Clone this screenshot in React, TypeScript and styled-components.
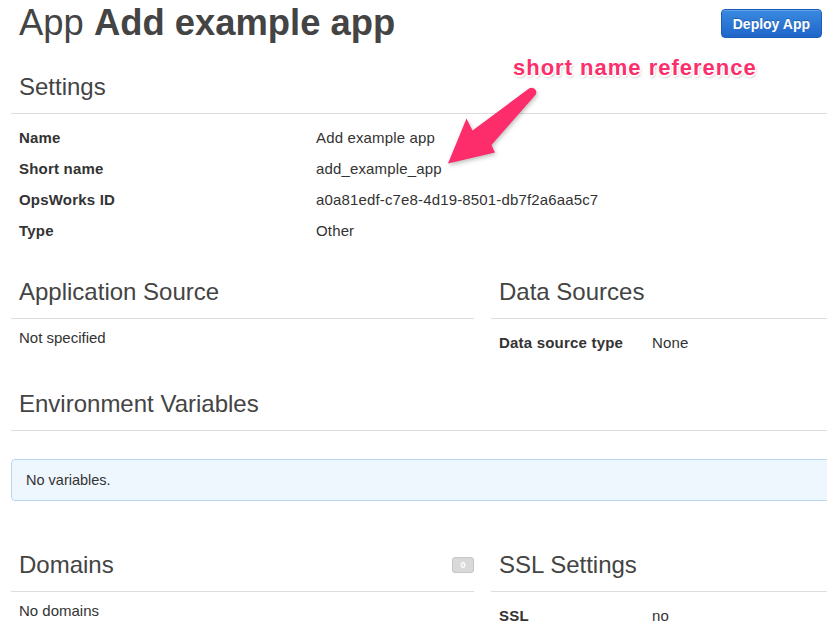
import React from "react";
import styled, { createGlobalStyle } from "styled-components";

const GlobalStyle = createGlobalStyle`
  html, body {
    margin: 0;
    padding: 0;
    background: #fff;
    overflow: hidden;
  }
  body {
    font-family: "Liberation Sans", Helvetica, Arial, sans-serif;
    color: #333;
    font-size: 15px;
  }
`;

const Page = styled.div`
  position: relative;
  width: 943px;
  padding-left: 11px;
  display: flex;
  flex-direction: column;
`;

const Header = styled.div`
  width: 811px;
  display: flex;
  justify-content: space-between;
  align-items: flex-start;
  padding-top: 3px;
`;

const Title = styled.h1`
  margin: 0;
  padding-left: 8px;
  font-size: 36.4px;
  line-height: 40px;
  font-weight: 400;
  color: #444;
  b {
    font-weight: 700;
  }
`;

const DeployButton = styled.button`
  margin-top: 6px;
  height: 29px;
  padding: 0 11px;
  border: 1px solid #1b5db8;
  border-radius: 4px;
  background: linear-gradient(#3a8ae0, #1f65c9);
  color: #fff;
  font-family: "Liberation Sans", Helvetica, Arial, sans-serif;
  font-size: 14px;
  font-weight: 700;
  text-shadow: 0 -1px 0 rgba(0, 0, 0, 0.25);
  box-shadow: inset 0 1px 0 rgba(255, 255, 255, 0.2);
`;

const Section = styled.section<{ $top?: number; $bottom?: number }>`
  margin-top: ${(p) => p.$top ?? 0}px;
  margin-bottom: ${(p) => p.$bottom ?? 30}px;
  min-width: 0;
`;

const SectionHeader = styled.div`
  display: flex;
  justify-content: space-between;
  align-items: center;
  padding: 2px 0 12px 8px;
  border-bottom: 1px solid #ddd;
`;

const SectionTitle = styled.h2`
  margin: 0;
  font-size: 24px;
  line-height: 28px;
  font-weight: 400;
  color: #444;
`;

const CountBadge = styled.span`
  display: inline-flex;
  align-items: center;
  justify-content: center;
  width: 20px;
  height: 14px;
  border: 1px solid #c6c6c6;
  border-radius: 3px;
  background: #d9d9d9;
  color: #fff;
  font-size: 9px;
  font-weight: 700;
`;

const Rows = styled.div`
  padding-top: 8px;
`;

const Row = styled.div<{ $labelWidth: number }>`
  display: grid;
  grid-template-columns: ${(p) => p.$labelWidth}px 1fr;
  align-items: center;
  height: 31px;
  padding-left: 8px;
`;

const Label = styled.span`
  font-size: 15px;
  font-weight: 700;
  letter-spacing: 0.2px;
  color: #333;
`;

const Value = styled.span`
  font-size: 15px;
  letter-spacing: 0.15px;
  color: #333;
`;

const Note = styled.p`
  margin: 9px 0 0;
  padding-left: 8px;
  font-size: 15px;
  line-height: 20px;
  color: #333;
`;

const Columns = styled.div`
  display: grid;
  grid-template-columns: 463px 463px;
  column-gap: 17px;
`;

const Alert = styled.div`
  margin: 28px 0 18px;
  padding: 10px 14px;
  border: 1px solid #b9d5ef;
  border-radius: 4px;
  background: #eff7fe;
  font-size: 14.5px;
  line-height: 20px;
  color: #333;
`;

const Callout = styled.div`
  position: absolute;
  left: 513px;
  top: 55px;
  font-size: 22px;
  line-height: 26px;
  font-weight: 700;
  letter-spacing: 1px;
  color: #fb2f6c;
  white-space: nowrap;
  text-shadow:
    -1.5px 0 0 #fff, 1.5px 0 0 #fff, 0 -1.5px 0 #fff, 0 1.5px 0 #fff,
    -1px -1px 0 #fff, 1px 1px 0 #fff, -1px 1px 0 #fff, 1px -1px 0 #fff,
    1px 2px 3px rgba(0, 0, 0, 0.35);
`;

const ArrowSvg = styled.svg`
  position: absolute;
  left: 440px;
  top: 80px;
  overflow: visible;
  filter: drop-shadow(1px 2px 2px rgba(0, 0, 0, 0.25));
`;

type Pair = [string, string];

const settings: Pair[] = [
  ["Name", "Add example app"],
  ["Short name", "add_example_app"],
  ["OpsWorks ID", "a0a81edf-c7e8-4d19-8501-db7f2a6aa5c7"],
  ["Type", "Other"],
];

const PairRows: React.FC<{ items: Pair[]; labelWidth: number }> = ({ items, labelWidth }) => (
  <Rows>
    {items.map(([k, v]) => (
      <Row key={k} $labelWidth={labelWidth}>
        <Label>{k}</Label>
        <Value>{v}</Value>
      </Row>
    ))}
  </Rows>
);

export default function App() {
  return (
    <>
      <GlobalStyle />
      <Page>
        <Header>
          <Title>
            App <b>Add example app</b>
          </Title>
          <DeployButton>Deploy App</DeployButton>
        </Header>

        <Section $top={28}>
          <SectionHeader>
            <SectionTitle>Settings</SectionTitle>
          </SectionHeader>
          <PairRows items={settings} labelWidth={297} />
        </Section>

        <Columns>
          <Section>
            <SectionHeader>
              <SectionTitle>Application Source</SectionTitle>
            </SectionHeader>
            <Note>Not specified</Note>
          </Section>
          <Section>
            <SectionHeader>
              <SectionTitle>Data Sources</SectionTitle>
            </SectionHeader>
            <PairRows items={[["Data source type", "None"]]} labelWidth={153} />
          </Section>
        </Columns>

        <Section>
          <SectionHeader>
            <SectionTitle>Environment Variables</SectionTitle>
          </SectionHeader>
          <Alert>No variables.</Alert>
        </Section>

        <Columns>
          <Section>
            <SectionHeader>
              <SectionTitle>Domains</SectionTitle>
              <CountBadge>0</CountBadge>
            </SectionHeader>
            <Note>No domains</Note>
          </Section>
          <Section>
            <SectionHeader>
              <SectionTitle>SSL Settings</SectionTitle>
            </SectionHeader>
            <PairRows items={[["SSL", "no"]]} labelWidth={153} />
          </Section>
        </Columns>

        <Callout>short name reference</Callout>
        <ArrowSvg width="110" height="95" viewBox="0 0 110 95">
          <path
            d="M8 83.5 L26.5 38.5 L32.5 50.5 L89 8.5 Q93.5 6.5 96 10.5 Q97 13.5 95 15.5 L51.5 65 L55 72.5 Z"
            fill="#fc2d6a"
          />
        </ArrowSvg>
      </Page>
    </>
  );
}
